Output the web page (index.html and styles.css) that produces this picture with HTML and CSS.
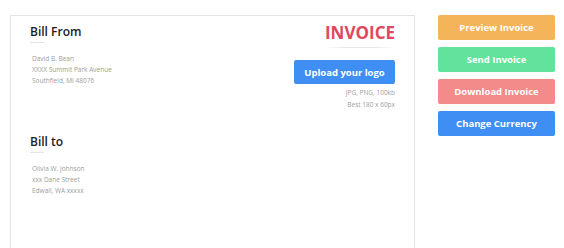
FILE: index.html
```html
<!DOCTYPE html>
<html>
<head>
<meta charset="utf-8">
<link rel="stylesheet" href="styles.css">
</head>
<body>
<div class="page">
  <div class="invoice">
    <div class="top">
      <div class="party">
        <h2 class="title">Bill From</h2>
        <div class="address">
          <div>David B. Bean</div>
          <div>XXXX Summit Park Avenue</div>
          <div>Southfield, MI 48076</div>
        </div>
      </div>
      <div class="brand">
        <h1 class="brand-title">INVOICE</h1>
        <button class="upload">Upload your logo</button>
        <div class="hint">
          <div>JPG, PNG, 100kb</div>
          <div>Best 180 x 60px</div>
        </div>
      </div>
    </div>
    <div class="party party-to">
      <h2 class="title">Bill to</h2>
      <div class="address">
        <div>Olivia W. Johnson</div>
        <div>xxx Dane Street</div>
        <div>Edwall, WA xxxxx</div>
      </div>
    </div>
  </div>
  <div class="actions">
    <button class="btn btn-preview">Preview Invoice</button>
    <button class="btn btn-send">Send Invoice</button>
    <button class="btn btn-download">Download Invoice</button>
    <button class="btn btn-currency">Change Currency</button>
  </div>
</div>
</body>
</html>
```

FILE: styles.css
```css
html, body {
  margin: 0;
  padding: 0;
  background: #ffffff;
  overflow: hidden;
}
body {
  font-family: "Open Sans", "Liberation Sans", sans-serif;
  width: 564px;
  height: 248px;
}
.page {
  display: flex;
  align-items: flex-start;
  padding-top: 15px;
  padding-left: 10px;
}
.invoice {
  width: 405px;
  height: 233px;
  border: 1px solid #e3e3e3;
  border-bottom: none;
  padding: 0 19px;
  box-sizing: border-box;
}
.top {
  display: flex;
  justify-content: space-between;
  align-items: flex-start;
}
.party {
  padding-top: 7px;
}
.title {
  margin: 0;
  font-size: 12px;
  font-weight: 600;
  color: #1c1c1c;
  line-height: 18px;
  padding-bottom: 6px;
}
.title::after {
  content: "";
  display: block;
  width: 14px;
  height: 1px;
  background: #e4e4e4;
  margin-top: 1px;
}
.address {
  margin-top: 4px;
  padding-left: 2px;
  font-size: 6.5px;
  line-height: 11px;
  color: #9d9d9d;
}
.brand {
  display: flex;
  flex-direction: column;
  align-items: flex-end;
  padding-top: 6px;
}
.brand-title {
  margin: 0;
  font-size: 17px;
  font-weight: 700;
  letter-spacing: 0;
  color: #e0485e;
  line-height: 22px;
  padding-bottom: 4px;
  background: linear-gradient(90deg, rgba(230,230,230,0), #e6e6e6 30%, #e6e6e6 70%, rgba(230,230,230,0)) no-repeat bottom / 100% 1px;
}
.upload {
  margin-top: 12px;
  width: 101px;
  height: 24px;
  border: none;
  border-radius: 2px;
  background: #3f8ef3;
  color: #ffffff;
  font-family: inherit;
  font-size: 9.5px;
  font-weight: 700;
  padding: 0;
}
.hint {
  margin-top: 3px;
  text-align: right;
  font-size: 6.5px;
  line-height: 12px;
  color: #a0a0a0;
}
.party-to {
  padding-top: 22px;
}
.actions {
  margin-left: 23px;
  width: 117px;
  display: flex;
  flex-direction: column;
  gap: 7px;
}
.btn {
  height: 25px;
  border: none;
  border-radius: 2px;
  color: #ffffff;
  font-family: inherit;
  font-size: 9.5px;
  font-weight: 700;
  padding: 0;
}
.btn-preview { background: #f4b45a; }
.btn-send { background: #62e39b; }
.btn-download { background: #f28b89; }
.btn-currency { background: #3f8ef3; }
```
